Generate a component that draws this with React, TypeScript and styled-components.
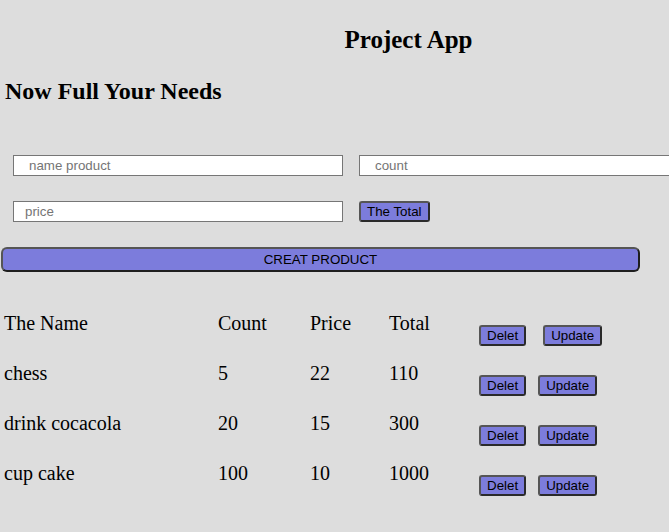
import React from "react";
import styled, { createGlobalStyle } from "styled-components";

const GlobalStyle = createGlobalStyle`
  html, body {
    margin: 0;
    padding: 0;
    background: #dddddd;
    overflow: hidden;
  }
  body {
    font-family: "Liberation Serif", "Times New Roman", serif;
    color: #000;
  }
`;

const Page = styled.div`
  width: 812px;
  padding: 26px 0 20px 5px;
  box-sizing: border-box;
`;

const Title = styled.h2`
  margin: 0;
  font-size: 25px;
  font-weight: bold;
  text-align: center;
`;

const SubTitle = styled.h2`
  margin: 24px 0 0;
  font-size: 24px;
  font-weight: bold;
`;

const Form = styled.div`
  display: flex;
  flex-direction: column;
  margin-top: 50px;
`;

const InputRow = styled.div`
  display: flex;
  align-items: center;
  gap: 16px;
  padding-left: 8px;
  margin-bottom: 25px;
`;

const Field = styled.input<{ $indent: number }>`
  width: 330px;
  height: 21px;
  box-sizing: border-box;
  border: 1px solid #767676;
  background: #fff;
  padding: 0 0 0 ${(p) => p.$indent}px;
  font-family: "Liberation Sans", Arial, sans-serif;
  font-size: 13.33px;
  outline: none;

  &::placeholder {
    color: #757575;
  }
`;

const ActionButton = styled.button`
  height: 21px;
  box-sizing: border-box;
  padding: 1px 6px;
  background: #7c7cdc;
  border: 2px solid #2a2a2a;
  border-top-color: #555;
  border-left-color: #555;
  border-radius: 3px;
  font-family: "Liberation Sans", Arial, sans-serif;
  font-size: 13.33px;
  color: #000;
  cursor: pointer;
`;

const CreateButton = styled.button`
  width: 639px;
  height: 25px;
  margin-left: -4px;
  box-sizing: border-box;
  background: #7c7cdc;
  border: 2px solid #1e1e1e;
  border-top-color: #555;
  border-left-color: #555;
  border-radius: 6px;
  font-family: "Liberation Sans", Arial, sans-serif;
  font-size: 13.33px;
  color: #000;
  cursor: pointer;
`;

const Table = styled.div`
  margin-top: 40px;
  margin-left: -1px;
  display: flex;
  flex-direction: column;
`;

const Row = styled.div`
  display: grid;
  grid-template-columns: 214px 92px 79px 90px auto;
  height: 50px;
  align-items: start;
  font-size: 20px;
`;

const Cell = styled.div`
  line-height: 23px;
`;

const ButtonCell = styled.div<{ $gap: number }>`
  display: flex;
  gap: ${(p) => p.$gap}px;
  padding-top: 13px;
`;

const products = [
  { name: "chess", count: 5, price: 22, total: 110 },
  { name: "drink cocacola", count: 20, price: 15, total: 300 },
  { name: "cup cake", count: 100, price: 10, total: 1000 },
];

export default function App() {
  return (
    <Page>
      <GlobalStyle />
      <Title>Project App</Title>
      <SubTitle>Now Full Your Needs</SubTitle>
      <Form>
        <InputRow>
          <Field $indent={15} placeholder="name product" />
          <Field $indent={15} placeholder="count" />
        </InputRow>
        <InputRow>
          <Field $indent={11} placeholder="price" />
          <ActionButton>The Total</ActionButton>
        </InputRow>
        <CreateButton>CREAT PRODUCT</CreateButton>
      </Form>
      <Table>
        <Row>
          <Cell>The Name</Cell>
          <Cell>Count</Cell>
          <Cell>Price</Cell>
          <Cell>Total</Cell>
          <ButtonCell $gap={17}>
            <ActionButton>Delet</ActionButton>
            <ActionButton>Update</ActionButton>
          </ButtonCell>
        </Row>
        {products.map((p) => (
          <Row key={p.name}>
            <Cell>{p.name}</Cell>
            <Cell>{p.count}</Cell>
            <Cell>{p.price}</Cell>
            <Cell>{p.total}</Cell>
            <ButtonCell $gap={12}>
              <ActionButton>Delet</ActionButton>
              <ActionButton>Update</ActionButton>
            </ButtonCell>
          </Row>
        ))}
      </Table>
    </Page>
  );
}
